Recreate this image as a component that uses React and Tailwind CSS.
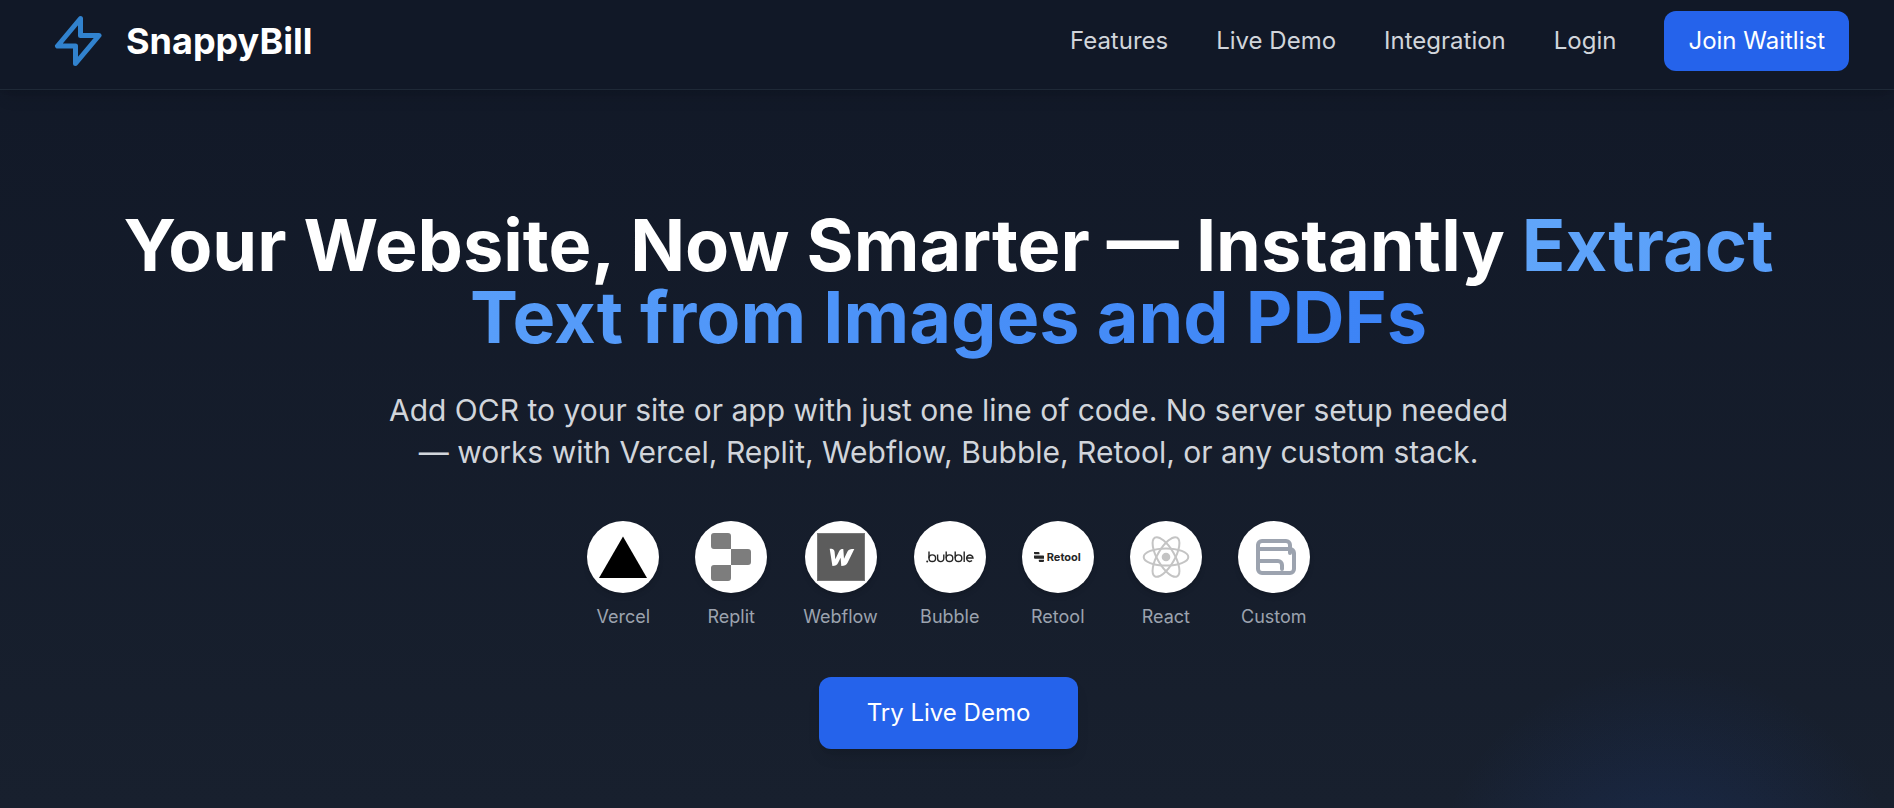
const links = ["Features", "Live Demo", "Integration", "Login"];

function BoltLogo() {
  return (
    <svg viewBox="0 0 48 52" className="h-13 w-12" fill="none" stroke="#3182ce" strokeWidth="5" strokeLinejoin="round" aria-hidden="true">
      <path d="M26.500 3.500 3.500 31H21.500V48.500L45 20.500H26.500Z" />
    </svg>
  );
}

function Vercel() {
  return (
    <svg viewBox="0 0 48 48" className="size-12" aria-hidden="true">
      <path d="M24 3.500 48 45H0Z" fill="#000" />
    </svg>
  );
}

function Replit() {
  return (
    <svg viewBox="0 0 48 48" className="size-12" fill="#7d7d7d" aria-hidden="true">
      <path d="M7 0h14a3 3 0 0 1 3 3v13H7a3 3 0 0 1-3-3V3a3 3 0 0 1 3-3ZM24 16h17a3 3 0 0 1 3 3v10a3 3 0 0 1-3 3H24ZM7 32h17v13a3 3 0 0 1-3 3H7a3 3 0 0 1-3-3V35a3 3 0 0 1 3-3Z" />
    </svg>
  );
}

function Webflow() {
  return (
    <svg viewBox="0 0 48 48" className="size-12" aria-hidden="true">
      <rect x=".5" y=".5" width="47" height="47" fill="#5c5c5c" stroke="#777" />
      <path d="M12.700 15.800C15.500 15.800 17.300 16.200 17.600 18.800L18.300 26.200L22 18.600C23 16.500 24 16 26.300 16L27 25.800L30.500 18.500C31.500 16.500 33.500 16 37.300 16L30.600 29.800C29.400 32.300 27.500 33 24.300 33L23.600 24.800L21.300 29.500C20 32.200 18.500 33 15.400 33Z" fill="#fff" />
    </svg>
  );
}

function Bubble() {
  return (
    <svg viewBox="0 0 48 48" className="size-12" fill="none" stroke="#262626" strokeWidth="1.400" aria-hidden="true">
      <circle cx="1.200" cy="28.400" r="1" fill="#262626" stroke="none" />
      <path d="M3 18.500V25.200M11.600 21.500v4a3.100 3.100 0 0 0 6.200 0v-4M20.200 18.500v6.700M29.200 18.500v6.700M38.200 18.500v10.500" />
      <circle cx="6.300" cy="25.200" r="3.300" />
      <circle cx="23.500" cy="25.200" r="3.300" />
      <circle cx="32.500" cy="25.200" r="3.300" />
      <path d="M40.800 25h6.200a3.200 3.200 0 1 0-1 2.600" />
    </svg>
  );
}

function Retool() {
  return (
    <span className="flex w-12 items-center gap-[3px] text-neutral-800">
      <svg viewBox="0 0 10 10" className="size-2.5 shrink-0" fill="currentColor" aria-hidden="true">
        <path d="M0 0h4.500a1 1 0 0 1 1 1v1.300H1a1 1 0 0 1-1-1ZM0 3.400h9.300a.7.700 0 0 1 .7.700v2.600H1a1 1 0 0 1-1-1ZM4.800 7.800H10V9a1 1 0 0 1-1 1H5.800a1 1 0 0 1-1-1Z" />
      </svg>
      <span className="text-[11px] leading-none font-bold">Retool</span>
    </span>
  );
}

function ReactMark() {
  return (
    <svg viewBox="0 0 48 48" className="size-12" fill="none" stroke="#c4c4c4" strokeWidth="2" aria-hidden="true">
      <circle cx="24" cy="24" r="4.300" fill="#c4c4c4" stroke="none" />
      <ellipse cx="24" cy="24" rx="22.300" ry="8.600" />
      <ellipse cx="24" cy="24" rx="22.300" ry="8.600" transform="rotate(60 24 24)" />
      <ellipse cx="24" cy="24" rx="22.300" ry="8.600" transform="rotate(120 24 24)" />
    </svg>
  );
}

function Custom() {
  return (
    <svg viewBox="0 0 48 48" className="size-12" fill="none" stroke="#9ca3af" strokeWidth="4" strokeLinecap="round" strokeLinejoin="round" aria-hidden="true">
      <path d="M8 16v-4a4 4 0 0 1 4-4h24a4 4 0 0 1 4 4v8M8 16v20a4 4 0 0 0 4 4h28a4 4 0 0 0 4-4V20a4 4 0 0 0-4-4H8M8 28h20a4 4 0 0 1 4 4v4" />
    </svg>
  );
}

const stacks = [
  ["Vercel", Vercel],
  ["Replit", Replit],
  ["Webflow", Webflow],
  ["Bubble", Bubble],
  ["Retool", Retool],
  ["React", ReactMark],
  ["Custom", Custom],
];

export default function App() {
  return (
    <div className="relative isolate min-h-screen overflow-hidden bg-linear-to-b from-[#111827] to-[#18202e] font-['Inter',sans-serif] text-white">
      <div className="absolute -right-3 -bottom-84 -z-10 size-120 rounded-full bg-[radial-gradient(closest-side,rgba(37,99,235,0.160),transparent)]" />
      <header className="flex items-center justify-between border-b border-[#1f2937] bg-[#111827] pr-[45px] pl-[54px] pt-[11px] pb-[18px] shadow-lg">
        <a href="#" className="flex items-center gap-6 text-4xl font-bold">
          <BoltLogo />
          SnappyBill
        </a>
        <nav className="flex items-center gap-12 text-2xl leading-9 text-[#d1d5db]">
          {links.map((l) => (
            <a key={l} href="#">{l}</a>
          ))}
          <button className="rounded-xl bg-[#2563eb] px-6 py-3 text-white">Join Waitlist</button>
        </nav>
      </header>

      <main className="flex flex-col items-center pr-12 pl-[51px] pt-[119px] pb-12 text-center">
        <h1 className="text-7xl leading-none font-bold">
          Your Website, Now Smarter — Instantly{" "}
          <span className="bg-linear-to-r from-[#60a5fa] to-[#3b82f6] bg-clip-text text-transparent">
            Extract Text from Images and PDFs
          </span>
        </h1>
        <p className="mt-9 max-w-6xl text-3xl leading-[42px] text-[#d1d5db]">
          Add OCR to your site or app with just one line of code. No server setup needed — works with Vercel, Replit, Webflow, Bubble, Retool, or any custom stack.
        </p>
        <ul className="mt-12 flex flex-wrap justify-center gap-9">
          {stacks.map(([name, Mark]) => (
            <li key={name} className="flex flex-col items-center gap-3">
              <span className="flex size-18 items-center justify-center rounded-full bg-white shadow-md">
                <Mark />
              </span>
              <span className="text-lg leading-6 text-[#9ca3af]">{name}</span>
            </li>
          ))}
        </ul>
        <button className="mt-12 rounded-xl bg-[#2563eb] px-12 py-[18px] text-2xl leading-9 shadow-lg">
          Try Live Demo
        </button>
      </main>
    </div>
  );
}
